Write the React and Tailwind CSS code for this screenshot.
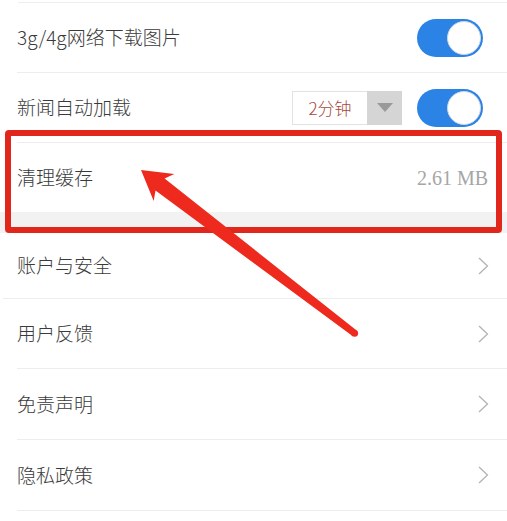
import React from "react";

function Toggle() {
  return (
    <div className="w-[66px] h-[38px] rounded-full bg-[#2b83e6] relative flex items-center justify-end pr-[2px]">
      <div className="w-[34px] h-[34px] rounded-full bg-white border border-[#cfd6de]" />
    </div>
  );
}

function Chevron() {
  return (
    <svg width="12" height="18" viewBox="0 0 12 18" className="block">
      <path d="M2 1 L10.5 9 L2 17" fill="none" stroke="#b3b3b3" strokeWidth="1.3" strokeLinejoin="miter" />
    </svg>
  );
}

function NavRow({ label, h, full }) {
  return (
    <div
      className={
        "flex items-center justify-between border-b border-[#ededed] pr-[18px] " +
        (full ? "ml-[3px] pl-[14px] " : "ml-[17px] ") +
        h
      }
    >
      <span className="text-[19px] font-light text-[#3a3a3a]">{label}</span>
      <Chevron />
    </div>
  );
}

export default function App() {
  const tip = [141, 170];
  const U = [0.794, 0.607];
  const N = [-0.607, 0.794];
  const P = (u, n) => [tip[0] + u * U[0] + n * N[0], tip[1] + u * U[1] + n * N[1]];
  const pts = [
    P(0, 0),
    P(29, -17),
    P(24, -7.5),
    P(269, -3.5),
    P(269, 3.5),
    P(24, 7.5),
    P(29, 17),
  ]
    .map((p) => p[0].toFixed(1) + "," + p[1].toFixed(1))
    .join(" ");
  const cap = P(269, 0);

  return (
    <div className="relative w-[507px] h-[521px] bg-white overflow-hidden font-['Noto_Sans_CJK_SC','Noto_Sans',sans-serif]">
      <div className="h-[3px] ml-[18px] border-b border-[#ededed]" />
      <div className="h-[70px] ml-[17px] pr-[24px] border-b border-[#ededed] flex items-center justify-between">
        <span className="text-[19px] font-light text-[#3a3a3a]">3g/4g网络下载图片</span>
        <Toggle />
      </div>
      <div className="h-[70px] ml-[17px] pr-[24px] border-b border-[#ededed] flex items-center justify-between">
        <span className="text-[19px] font-light text-[#3a3a3a]">新闻自动加载</span>
        <div className="flex items-center gap-[15px]">
          <div className="flex h-[34px]">
            <div className="w-[75px] border border-[#e2e2e2] border-r-0 flex items-center justify-center text-[17px] font-light text-[#a4473d]">
              2分钟
            </div>
            <div className="w-[35px] bg-[#d5d5d5] flex items-center justify-center">
              <svg width="16" height="9" viewBox="0 0 16 9">
                <path d="M0 0 L16 0 L8 9 Z" fill="#9a9a9a" />
              </svg>
            </div>
          </div>
          <Toggle />
        </div>
      </div>
      <div className="h-[69px] ml-[17px] pr-[19px] flex items-center justify-between">
        <span className="text-[19px] font-light text-[#3a3a3a]">清理缓存</span>
        <span className="text-[20px] text-[#a6a6a6] font-['Liberation_Serif',serif]">2.61 MB</span>
      </div>
      <div className="h-[21px] bg-[#f2f2f2]" />
      <NavRow label="账户与安全" h="h-[66px]" full />
      <NavRow label="用户反馈" h="h-[70px]" />
      <NavRow label="免责声明" h="h-[71px]" />
      <NavRow label="隐私政策" h="h-[71px]" />

      <div className="absolute left-[5px] top-[130px] w-[497px] h-[103px] border-[6px] border-[#e1261c] rounded-[4px]" />
      <svg className="absolute left-0 top-0" width="507" height="521" viewBox="0 0 507 521">
        <polygon points={pts} fill="#ee2a1f" strokeLinejoin="round" />
        <circle cx={cap[0]} cy={cap[1]} r="3.5" fill="#ee2a1f" />
      </svg>
    </div>
  );
}
